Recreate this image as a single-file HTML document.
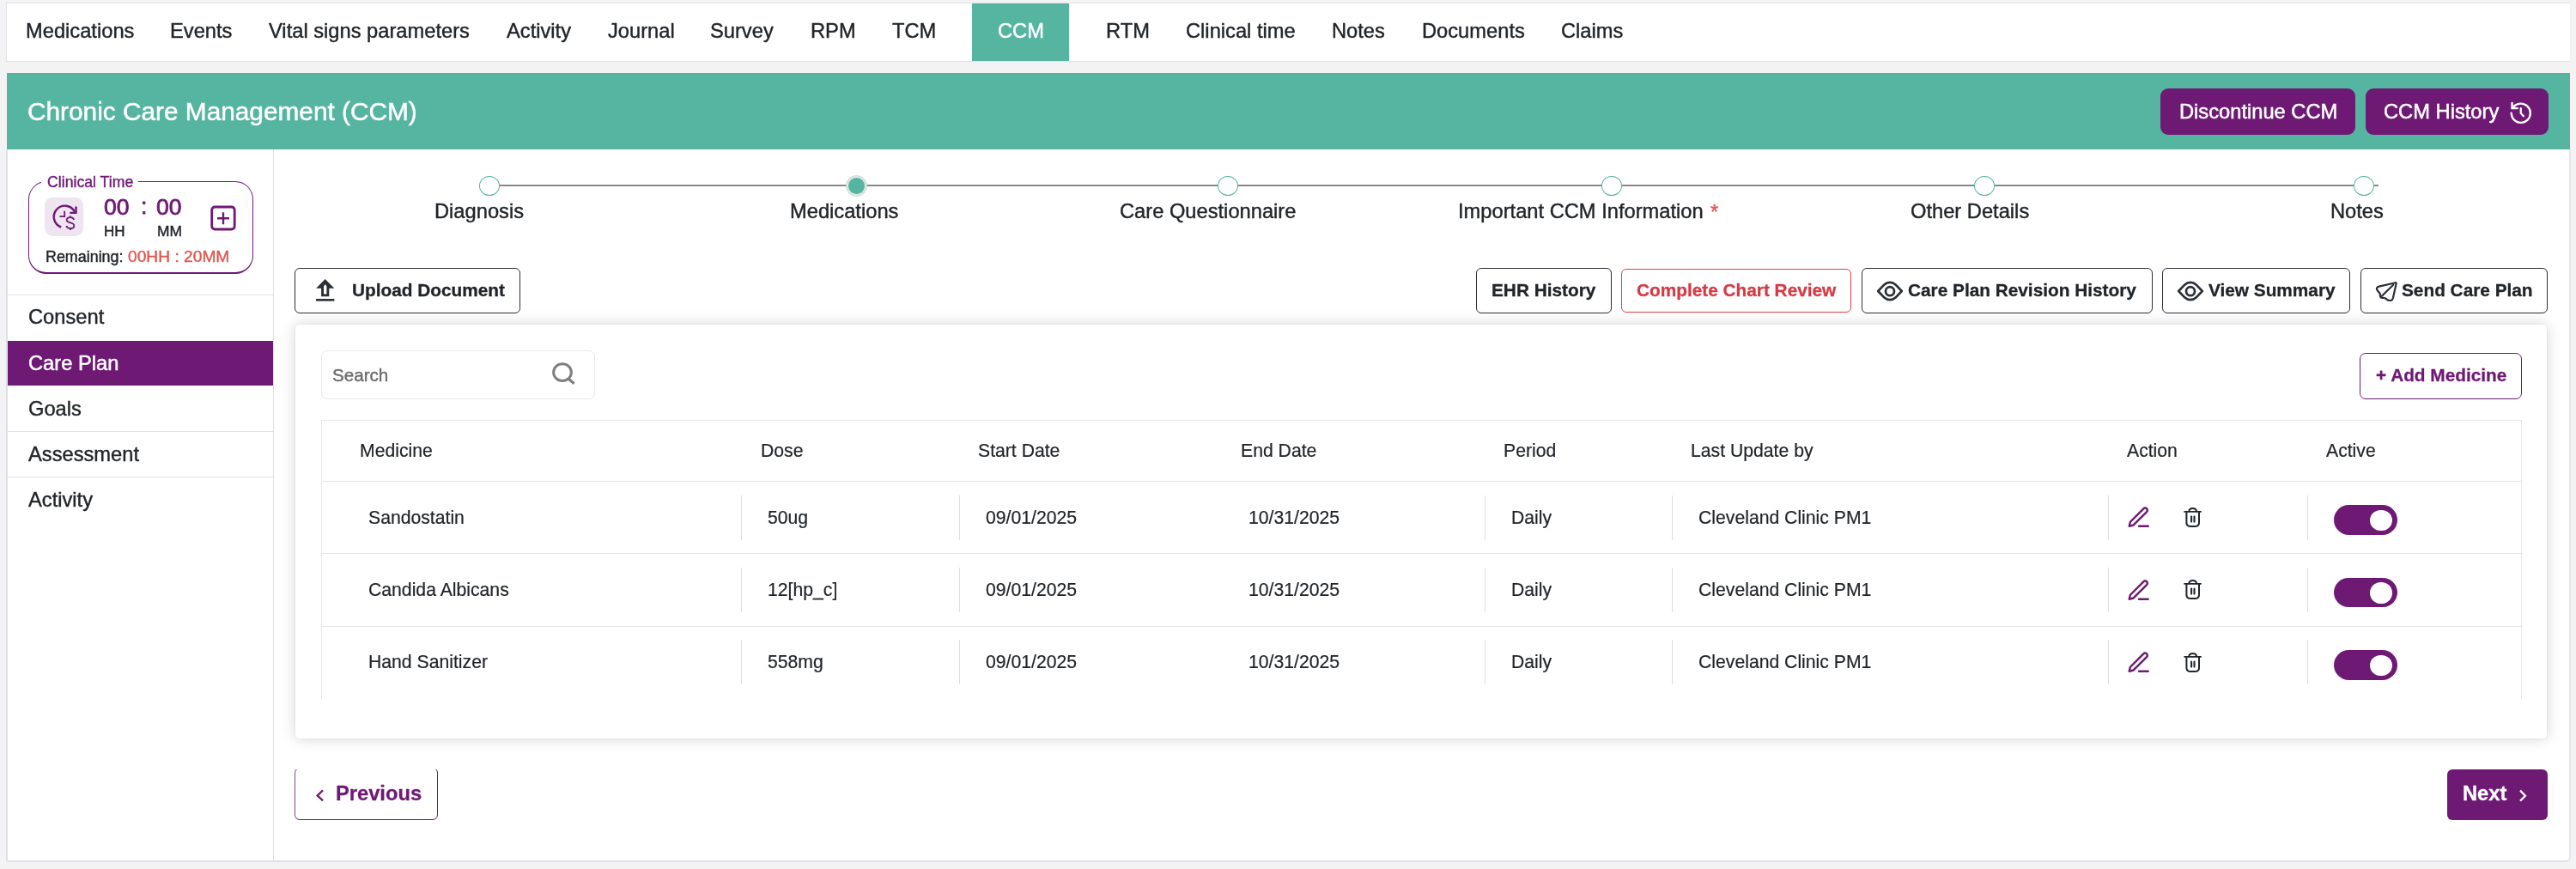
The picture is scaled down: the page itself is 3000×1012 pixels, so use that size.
<!DOCTYPE html>
<html><head><meta charset="utf-8"><title>CCM</title>
<style>
html,body{margin:0;padding:0;}
body{width:3000px;height:1012px;background:#f3f3f4;position:relative;overflow:hidden;font-family:"Liberation Sans",sans-serif;}
.t{position:absolute;line-height:1;white-space:nowrap;will-change:transform;-webkit-text-stroke:0.4px currentColor;}
.b{position:absolute;display:block;box-sizing:border-box;}
</style></head><body>
<div class="b" style="left:7px;top:3px;width:2986px;height:69px;background:#fff;border:1px solid #dfe2e7;border-right:none;"></div>
<div class="b" style="left:1132px;top:4px;width:113px;height:67px;background:#55b5a1;"></div>
<div class="t" style="left:30px;top:25px;font-size:23.7px;color:#212529;">Medications</div>
<div class="t" style="left:198px;top:25px;font-size:23.7px;color:#212529;">Events</div>
<div class="t" style="left:313px;top:25px;font-size:23.7px;color:#212529;">Vital signs parameters</div>
<div class="t" style="left:590px;top:25px;font-size:23.7px;color:#212529;">Activity</div>
<div class="t" style="left:708px;top:25px;font-size:23.7px;color:#212529;">Journal</div>
<div class="t" style="left:827px;top:25px;font-size:23.7px;color:#212529;">Survey</div>
<div class="t" style="left:944px;top:25px;font-size:23.7px;color:#212529;">RPM</div>
<div class="t" style="left:1039px;top:25px;font-size:23.7px;color:#212529;">TCM</div>
<div class="t" style="left:1288px;top:25px;font-size:23.7px;color:#212529;">RTM</div>
<div class="t" style="left:1381px;top:25px;font-size:23.7px;color:#212529;">Clinical time</div>
<div class="t" style="left:1551px;top:25px;font-size:23.7px;color:#212529;">Notes</div>
<div class="t" style="left:1656px;top:25px;font-size:23.7px;color:#212529;">Documents</div>
<div class="t" style="left:1818px;top:25px;font-size:23.7px;color:#212529;">Claims</div>
<div class="t" style="left:1162px;top:25px;font-size:23.7px;color:#fff;-webkit-text-stroke:0.45px #fff;">CCM</div>
<div class="b" style="left:7px;top:174px;width:2987.3px;height:830.3px;background:#fff;border-left:2px solid #dde1e6;border-bottom:2.2px solid #dde1e6;border-right:2px solid #e3e6ea;border-radius:0 0 6px 3px;"></div>
<div class="b" style="left:8px;top:85px;width:2985px;height:89px;background:#55b5a1;"></div>
<div class="t" style="left:32px;top:115px;font-size:29.8px;color:#fff;-webkit-text-stroke:0.5px #fff;">Chronic Care Management (CCM)</div>
<div class="b" style="left:2516px;top:103px;width:227px;height:54px;background:#6e1a75;border-radius:9px;"></div>
<div class="b" style="left:2755px;top:103px;width:213px;height:54px;background:#6e1a75;border-radius:9px;"></div>
<div class="t" style="left:2538px;top:119px;font-size:23.7px;color:#fff;-webkit-text-stroke:0.5px #fff;">Discontinue CCM</div>
<div class="t" style="left:2776px;top:119px;font-size:23.7px;color:#fff;-webkit-text-stroke:0.5px #fff;">CCM History</div>
<svg class="b" style="left:2921.24px;top:117.04px" width="29.52" height="29.52" viewBox="0 0 24 24" fill="none" stroke="#fff" stroke-width="1.9" stroke-linecap="round" stroke-linejoin="round"><path d="M3 12a9 9 0 1 0 9-9 9.75 9.75 0 0 0-6.74 2.74L3.7 7.4"/><path d="M3.7 2.3v5.1h5.1"/><path d="M12 7.5v4.5l2.5 2.8"/></svg>
<div class="b" style="left:318px;top:174px;width:1px;height:829px;background:#dfe1e5;"></div>
<div class="b" style="left:33px;top:211px;width:261.8px;height:107.69999999999999px;border:solid #6e1a75;border-width:1.4px 1.6px 2.1px 1.6px;border-radius:21px;box-sizing:border-box;"></div>
<div class="b" style="left:47.5px;top:205px;width:113.5px;height:17px;background:#fff;"></div>
<div class="t" style="left:55px;top:204px;font-size:17.7px;color:#6e1a75;">Clinical Time</div>
<div class="b" style="left:52px;top:230px;width:45px;height:45px;background:#efe5f1;border-radius:9px;"></div>
<svg class="b" style="left:52px;top:230px" width="45" height="45" viewBox="52 230 45 45" fill="none" stroke="#6e1a75" stroke-width="2.4" stroke-linecap="butt">
<path d="M71.2 264.5 A12.8 12.8 0 1 1 86.9 246.6"/>
<path d="M88.5 240.6 V247.9 H81.3"/>
<path d="M75.2 245.8 V252.2 H69.5" stroke-width="1.8"/>
<path d="M86.1 255.9 C85.5 253.9 83.8 253.1 81.9 253.1 C79.4 253.1 77.7 254.3 77.7 256.2 C77.7 258.2 79.5 258.8 81.9 259.4 C84.5 260 86.3 260.8 86.3 262.9 C86.3 264.9 84.5 266 81.9 266 C79.5 266 77.8 265 77.3 263.1 M81.9 251.2 V253.6 M81.9 265.6 V268" stroke-width="1.8"/>
</svg>
<div class="t" style="left:121px;top:228px;font-size:26.5px;color:#6e1a75;-webkit-text-stroke:0.8px #6e1a75;">00</div>
<div class="t" style="left:164px;top:227px;font-size:26.5px;color:#6e1a75;-webkit-text-stroke:0.8px #6e1a75;">:</div>
<div class="t" style="left:182px;top:228px;font-size:26.5px;color:#6e1a75;-webkit-text-stroke:0.8px #6e1a75;">00</div>
<div class="t" style="left:121px;top:261px;font-size:17px;color:#212529;">HH</div>
<div class="t" style="left:183px;top:261px;font-size:17.4px;color:#212529;">MM</div>
<svg class="b" style="left:244px;top:238px" width="32" height="32" viewBox="244 238 32 32" fill="none" stroke="#6e1a75" stroke-width="2.8" stroke-linecap="butt"><rect x="246.7" y="241" width="26.5" height="26" rx="3.5"/><path d="M253 254.3H267M260 247.3V261.3" stroke-width="2.4"/></svg>
<div class="t" style="left:53px;top:291px;font-size:17.9px;color:#212529;">Remaining:</div>
<div class="t" style="left:149px;top:289px;font-size:19.2px;color:#e0574f;">00HH : 20MM</div>
<div class="b" style="left:9px;top:343px;width:309px;height:1px;background:#e3e3e3;"></div>
<div class="b" style="left:9px;top:397px;width:309px;height:52px;background:#6e1a75;"></div>
<div class="b" style="left:9px;top:502px;width:309px;height:1px;background:#e3e3e3;"></div>
<div class="b" style="left:9px;top:555px;width:309px;height:1px;background:#e3e3e3;"></div>
<div class="t" style="left:33px;top:358px;font-size:23.7px;color:#212529;">Consent</div>
<div class="t" style="left:33px;top:412px;font-size:23.7px;color:#fff;-webkit-text-stroke:0.5px #fff;">Care Plan</div>
<div class="t" style="left:33px;top:465px;font-size:23.7px;color:#212529;">Goals</div>
<div class="t" style="left:33px;top:518px;font-size:23.7px;color:#212529;">Assessment</div>
<div class="t" style="left:33px;top:571px;font-size:23.7px;color:#212529;">Activity</div>
<div class="b" style="left:570px;top:215px;width:2200px;height:2px;background:#878787;"></div>
<div class="b" style="left:557.9px;top:204.9px;width:24.200000000000045px;height:23.19999999999999px;background:#fff;border:1.7px solid #55b5a1;border-radius:50%;box-sizing:border-box;"></div>
<div class="b" style="left:984.9px;top:203.60000000000002px;width:25.40000000000009px;height:25.399999999999977px;background:#e3e5e5;border:1px solid #bfe0d8;border-radius:50%;box-sizing:border-box;"></div>
<div class="b" style="left:987.9px;top:206.60000000000002px;width:19.40000000000009px;height:19.399999999999977px;background:#55b5a1;border-radius:50%;"></div>
<div class="b" style="left:1417.9px;top:204.9px;width:24.199999999999818px;height:23.19999999999999px;background:#fff;border:1.7px solid #55b5a1;border-radius:50%;box-sizing:border-box;"></div>
<div class="b" style="left:1864.8000000000002px;top:204.9px;width:24.199999999999818px;height:23.19999999999999px;background:#fff;border:1.7px solid #55b5a1;border-radius:50%;box-sizing:border-box;"></div>
<div class="b" style="left:2298.9px;top:204.9px;width:24.199999999999818px;height:23.19999999999999px;background:#fff;border:1.7px solid #55b5a1;border-radius:50%;box-sizing:border-box;"></div>
<div class="b" style="left:2740.9px;top:204.9px;width:24.199999999999818px;height:23.19999999999999px;background:#fff;border:1.7px solid #55b5a1;border-radius:50%;box-sizing:border-box;"></div>
<div class="t" style="left:506px;top:235px;font-size:23.7px;color:#212529;">Diagnosis</div>
<div class="t" style="left:920px;top:235px;font-size:23.7px;color:#212529;">Medications</div>
<div class="t" style="left:1304px;top:235px;font-size:23.7px;color:#212529;">Care Questionnaire</div>
<div class="t" style="left:1698px;top:235px;font-size:23.7px;color:#212529;">Important CCM Information</div>
<div class="t" style="left:2225px;top:235px;font-size:23.7px;color:#212529;">Other Details</div>
<div class="t" style="left:2714px;top:235px;font-size:23.7px;color:#212529;">Notes</div>
<div class="t" style="left:1992px;top:236px;font-size:23.7px;color:#e25555;">*</div>
<div class="b" style="left:343.3px;top:312.2px;width:262.3px;height:53.0px;border:1.2px solid #2b2f36;border-radius:6px;box-sizing:border-box;background:#fff;"></div>
<svg class="b" style="left:366px;top:323px" width="26" height="30" viewBox="366 323 26 30"><path d="M368.1 335.7 L378.7 325.1 L389.3 335.7 H383.3 V345.2 H374.1 V335.7 Z" fill="#2b2f36"/><path d="M377 342.4 V333.6 L378.7 331 L380.4 333.6 V342.4 Z" fill="#fff"/><rect x="368" y="348" width="21.4" height="2.6" fill="#2b2f36"/></svg>
<div class="t" style="left:410px;top:328px;font-size:20.8px;color:#212529;font-weight:700;-webkit-text-stroke:0.3px currentColor;">Upload Document</div>
<div class="b" style="left:1719px;top:312.2px;width:157.5px;height:53.0px;border:1.2px solid #2b2f36;border-radius:6px;box-sizing:border-box;background:#fff;"></div>
<div class="t" style="left:1737px;top:328px;font-size:20.8px;color:#212529;font-weight:700;-webkit-text-stroke:0.3px currentColor;">EHR History</div>
<div class="b" style="left:1888px;top:313px;width:267.9000000000001px;height:51px;border:1.2px solid #dc4250;border-radius:6px;box-sizing:border-box;background:#fff;"></div>
<div class="t" style="left:1906px;top:328px;font-size:20.8px;color:#d63a45;font-weight:700;-webkit-text-stroke:0.3px currentColor;">Complete Chart Review</div>
<div class="b" style="left:2168px;top:312.2px;width:338.6999999999998px;height:53.0px;border:1.2px solid #2b2f36;border-radius:6px;box-sizing:border-box;background:#fff;"></div>
<div class="b" style="left:2518.4px;top:312.2px;width:218.29999999999973px;height:53.0px;border:1.2px solid #2b2f36;border-radius:6px;box-sizing:border-box;background:#fff;"></div>
<div class="b" style="left:2749.2px;top:312.2px;width:217.60000000000036px;height:53.0px;border:1.2px solid #2b2f36;border-radius:6px;box-sizing:border-box;background:#fff;"></div>
<svg class="b" style="left:2184px;top:325px" width="34" height="28" viewBox="-17 -14 34 28" fill="none" stroke="#2b2f36" stroke-width="2.7" stroke-linejoin="round"><path d="M-13.8 0 L-6.5 -7.6 A9.45 9.45 0 0 1 6.5 -7.6 L13.8 0 L6.5 7.6 A9.45 9.45 0 0 1 -6.5 7.6 Z"/><circle cx="0" cy="0.2" r="5"/></svg>
<svg class="b" style="left:2534px;top:325px" width="34" height="28" viewBox="-17 -14 34 28" fill="none" stroke="#2b2f36" stroke-width="2.7" stroke-linejoin="round"><path d="M-13.8 0 L-6.5 -7.6 A9.45 9.45 0 0 1 6.5 -7.6 L13.8 0 L6.5 7.6 A9.45 9.45 0 0 1 -6.5 7.6 Z"/><circle cx="0" cy="0.2" r="5"/></svg>
<div class="t" style="left:2222px;top:328px;font-size:20.8px;color:#212529;font-weight:700;-webkit-text-stroke:0.3px currentColor;">Care Plan Revision History</div>
<div class="t" style="left:2572px;top:328px;font-size:20.8px;color:#212529;font-weight:700;-webkit-text-stroke:0.3px currentColor;">View Summary</div>
<svg class="b" style="left:2762px;top:324px" width="34" height="32" viewBox="2762 324 34 32" fill="none" stroke="#2b2f36" stroke-width="2.2" stroke-linejoin="round" stroke-linecap="round"><path d="M2789.8 329.2 L2770.5 333.6 Q2766.5 335.2 2768.6 338 L2771.6 341.8 L2772.2 345.6 Q2772.6 347.2 2775 346.9 Q2777.5 346.6 2779.3 348.4 Q2781.6 350.4 2784.4 349.9 Q2786.3 349.5 2786.8 347.5 L2790.6 330.4 Q2790.8 329 2789.8 329.2 Z"/><path d="M2787.2 331.8 L2772.8 345.7"/></svg>
<div class="t" style="left:2797px;top:328px;font-size:20.8px;color:#212529;font-weight:700;-webkit-text-stroke:0.3px currentColor;">Send Care Plan</div>
<div class="b" style="left:343.5px;top:377.5px;width:2622.7px;height:482.1px;background:#fff;border-radius:4.5px;box-shadow:0 0 17px rgba(0,0,0,0.17), 0 0 3px rgba(0,0,0,0.07);"></div>
<div class="b" style="left:374.2px;top:408px;width:318.59999999999997px;height:56.69999999999999px;border:1.2px solid #e9e9e9;border-radius:7px;box-sizing:border-box;"></div>
<div class="t" style="left:387px;top:427px;font-size:20.6px;color:#6a6a6a;">Search</div>
<svg class="b" style="left:640px;top:419px" width="34" height="32" viewBox="640 419 34 32" fill="none" stroke="#808080" stroke-width="3" stroke-linecap="butt"><ellipse cx="655" cy="433.6" rx="10.4" ry="9.9"/><path d="M662.3 441.2 L668.6 446.8" stroke-width="3.2"/></svg>
<div class="b" style="left:2748px;top:411px;width:188.5999999999999px;height:53.5px;border:1.6px solid #6e1a75;border-radius:7px;box-sizing:border-box;"></div>
<div class="t" style="left:2767px;top:427px;font-size:20.8px;color:#6e1a75;font-weight:700;-webkit-text-stroke:0.3px currentColor;">+ Add Medicine</div>
<div class="b" style="left:374px;top:489px;width:2563px;height:1px;background:#e6e6e6;"></div>
<div class="b" style="left:374px;top:489px;width:1px;height:324.5px;background:#e8e8e8;"></div>
<div class="b" style="left:2936px;top:489px;width:1px;height:324.5px;background:#e8e8e8;"></div>
<div class="b" style="left:374px;top:560px;width:2563px;height:1px;background:#e4e4e4;"></div>
<div class="b" style="left:374px;top:644px;width:2563px;height:1px;background:#e4e4e4;"></div>
<div class="b" style="left:374px;top:729px;width:2563px;height:1px;background:#e4e4e4;"></div>
<div class="t" style="left:419px;top:514px;font-size:21.2px;color:#212529;-webkit-text-stroke:0.2px currentColor;">Medicine</div>
<div class="t" style="left:886px;top:514px;font-size:21.2px;color:#212529;-webkit-text-stroke:0.2px currentColor;">Dose</div>
<div class="t" style="left:1139px;top:514px;font-size:21.2px;color:#212529;-webkit-text-stroke:0.2px currentColor;">Start Date</div>
<div class="t" style="left:1445px;top:514px;font-size:21.2px;color:#212529;-webkit-text-stroke:0.2px currentColor;">End Date</div>
<div class="t" style="left:1751px;top:514px;font-size:21.2px;color:#212529;-webkit-text-stroke:0.2px currentColor;">Period</div>
<div class="t" style="left:1969px;top:514px;font-size:21.2px;color:#212529;-webkit-text-stroke:0.2px currentColor;">Last Update by</div>
<div class="t" style="left:2477px;top:514px;font-size:21.2px;color:#212529;-webkit-text-stroke:0.2px currentColor;">Action</div>
<div class="t" style="left:2709px;top:514px;font-size:21.2px;color:#212529;-webkit-text-stroke:0.2px currentColor;">Active</div>
<div class="b" style="left:862.5px;top:576.5px;width:1.0px;height:52.0px;background:#dedede;"></div>
<div class="b" style="left:1116.9px;top:576.5px;width:1.0px;height:52.0px;background:#dedede;"></div>
<div class="b" style="left:1728.8px;top:576.5px;width:1.0px;height:52.0px;background:#dedede;"></div>
<div class="b" style="left:1946.5px;top:576.5px;width:1.0px;height:52.0px;background:#dedede;"></div>
<div class="b" style="left:2454.9px;top:576.5px;width:1.0px;height:52.0px;background:#dedede;"></div>
<div class="b" style="left:2686.9px;top:576.5px;width:1.0px;height:52.0px;background:#dedede;"></div>
<div class="t" style="left:429px;top:592px;font-size:21.2px;color:#212529;-webkit-text-stroke:0.2px currentColor;">Sandostatin</div>
<div class="t" style="left:894px;top:592px;font-size:21.2px;color:#212529;-webkit-text-stroke:0.2px currentColor;">50ug</div>
<div class="t" style="left:1148px;top:592px;font-size:21.2px;color:#212529;-webkit-text-stroke:0.2px currentColor;">09/01/2025</div>
<div class="t" style="left:1454px;top:592px;font-size:21.2px;color:#212529;-webkit-text-stroke:0.2px currentColor;">10/31/2025</div>
<div class="t" style="left:1760px;top:592px;font-size:21.2px;color:#212529;-webkit-text-stroke:0.2px currentColor;">Daily</div>
<div class="t" style="left:1978px;top:592px;font-size:21.2px;color:#212529;-webkit-text-stroke:0.2px currentColor;">Cleveland Clinic PM1</div>
<svg class="b" style="left:2476px;top:588.30px" width="29.64" height="29.64" viewBox="0 0 24 24" fill="none" stroke="#6e1a75" stroke-width="2" stroke-linecap="round" stroke-linejoin="round"><path d="M12.2 20h8.6"/><path d="M16.5 3.5a2.121 2.121 0 0 1 3 3L7 19l-4 1 1-4L16.5 3.5z"/></svg>
<svg class="b" style="left:2540px;top:588.00px" width="28" height="30" viewBox="2540 588 28 30" fill="none" stroke="#212529" stroke-width="2" stroke-linecap="round" stroke-linejoin="round"><path d="M2544 595.9H2563.2" stroke-width="1.6"/><path d="M2549.3 595.5 Q2549.6 591.9 2553.6 591.9 Q2557.8 591.9 2558.1 595.5"/><path d="M2546.4 596 V608.8 Q2546.4 612.9 2550.5 612.9 H2556.9 Q2561 612.9 2561 608.8 V596"/><path d="M2552.1 601.6V607.6M2555.5 601.6V607.6" stroke-width="2.1"/></svg>
<div class="b" style="left:2718px;top:588.2px;width:74px;height:34.59999999999991px;background:#6e1a75;border-radius:18px;"></div>
<div class="b" style="left:2760.1px;top:593.7px;width:25.5px;height:24.59999999999991px;background:#fff;border-radius:50%;"></div>
<div class="b" style="left:862.5px;top:660.9px;width:1.0px;height:52.0px;background:#dedede;"></div>
<div class="b" style="left:1116.9px;top:660.9px;width:1.0px;height:52.0px;background:#dedede;"></div>
<div class="b" style="left:1728.8px;top:660.9px;width:1.0px;height:52.0px;background:#dedede;"></div>
<div class="b" style="left:1946.5px;top:660.9px;width:1.0px;height:52.0px;background:#dedede;"></div>
<div class="b" style="left:2454.9px;top:660.9px;width:1.0px;height:52.0px;background:#dedede;"></div>
<div class="b" style="left:2686.9px;top:660.9px;width:1.0px;height:52.0px;background:#dedede;"></div>
<div class="t" style="left:429px;top:676px;font-size:21.2px;color:#212529;-webkit-text-stroke:0.2px currentColor;">Candida Albicans</div>
<div class="t" style="left:894px;top:676px;font-size:21.2px;color:#212529;-webkit-text-stroke:0.2px currentColor;">12[hp_c]</div>
<div class="t" style="left:1148px;top:676px;font-size:21.2px;color:#212529;-webkit-text-stroke:0.2px currentColor;">09/01/2025</div>
<div class="t" style="left:1454px;top:676px;font-size:21.2px;color:#212529;-webkit-text-stroke:0.2px currentColor;">10/31/2025</div>
<div class="t" style="left:1760px;top:676px;font-size:21.2px;color:#212529;-webkit-text-stroke:0.2px currentColor;">Daily</div>
<div class="t" style="left:1978px;top:676px;font-size:21.2px;color:#212529;-webkit-text-stroke:0.2px currentColor;">Cleveland Clinic PM1</div>
<svg class="b" style="left:2476px;top:672.70px" width="29.64" height="29.64" viewBox="0 0 24 24" fill="none" stroke="#6e1a75" stroke-width="2" stroke-linecap="round" stroke-linejoin="round"><path d="M12.2 20h8.6"/><path d="M16.5 3.5a2.121 2.121 0 0 1 3 3L7 19l-4 1 1-4L16.5 3.5z"/></svg>
<svg class="b" style="left:2540px;top:672.40px" width="28" height="30" viewBox="2540 588 28 30" fill="none" stroke="#212529" stroke-width="2" stroke-linecap="round" stroke-linejoin="round"><path d="M2544 595.9H2563.2" stroke-width="1.6"/><path d="M2549.3 595.5 Q2549.6 591.9 2553.6 591.9 Q2557.8 591.9 2558.1 595.5"/><path d="M2546.4 596 V608.8 Q2546.4 612.9 2550.5 612.9 H2556.9 Q2561 612.9 2561 608.8 V596"/><path d="M2552.1 601.6V607.6M2555.5 601.6V607.6" stroke-width="2.1"/></svg>
<div class="b" style="left:2718px;top:672.6px;width:74px;height:34.59999999999991px;background:#6e1a75;border-radius:18px;"></div>
<div class="b" style="left:2760.1px;top:678.1px;width:25.5px;height:24.59999999999991px;background:#fff;border-radius:50%;"></div>
<div class="b" style="left:862.5px;top:745.3px;width:1.0px;height:52.0px;background:#dedede;"></div>
<div class="b" style="left:1116.9px;top:745.3px;width:1.0px;height:52.0px;background:#dedede;"></div>
<div class="b" style="left:1728.8px;top:745.3px;width:1.0px;height:52.0px;background:#dedede;"></div>
<div class="b" style="left:1946.5px;top:745.3px;width:1.0px;height:52.0px;background:#dedede;"></div>
<div class="b" style="left:2454.9px;top:745.3px;width:1.0px;height:52.0px;background:#dedede;"></div>
<div class="b" style="left:2686.9px;top:745.3px;width:1.0px;height:52.0px;background:#dedede;"></div>
<div class="t" style="left:429px;top:760px;font-size:21.2px;color:#212529;-webkit-text-stroke:0.2px currentColor;">Hand Sanitizer</div>
<div class="t" style="left:894px;top:760px;font-size:21.2px;color:#212529;-webkit-text-stroke:0.2px currentColor;">558mg</div>
<div class="t" style="left:1148px;top:760px;font-size:21.2px;color:#212529;-webkit-text-stroke:0.2px currentColor;">09/01/2025</div>
<div class="t" style="left:1454px;top:760px;font-size:21.2px;color:#212529;-webkit-text-stroke:0.2px currentColor;">10/31/2025</div>
<div class="t" style="left:1760px;top:760px;font-size:21.2px;color:#212529;-webkit-text-stroke:0.2px currentColor;">Daily</div>
<div class="t" style="left:1978px;top:760px;font-size:21.2px;color:#212529;-webkit-text-stroke:0.2px currentColor;">Cleveland Clinic PM1</div>
<svg class="b" style="left:2476px;top:757.10px" width="29.64" height="29.64" viewBox="0 0 24 24" fill="none" stroke="#6e1a75" stroke-width="2" stroke-linecap="round" stroke-linejoin="round"><path d="M12.2 20h8.6"/><path d="M16.5 3.5a2.121 2.121 0 0 1 3 3L7 19l-4 1 1-4L16.5 3.5z"/></svg>
<svg class="b" style="left:2540px;top:756.80px" width="28" height="30" viewBox="2540 588 28 30" fill="none" stroke="#212529" stroke-width="2" stroke-linecap="round" stroke-linejoin="round"><path d="M2544 595.9H2563.2" stroke-width="1.6"/><path d="M2549.3 595.5 Q2549.6 591.9 2553.6 591.9 Q2557.8 591.9 2558.1 595.5"/><path d="M2546.4 596 V608.8 Q2546.4 612.9 2550.5 612.9 H2556.9 Q2561 612.9 2561 608.8 V596"/><path d="M2552.1 601.6V607.6M2555.5 601.6V607.6" stroke-width="2.1"/></svg>
<div class="b" style="left:2718px;top:757.0px;width:74px;height:34.59999999999991px;background:#6e1a75;border-radius:18px;"></div>
<div class="b" style="left:2760.1px;top:762.5px;width:25.5px;height:24.59999999999991px;background:#fff;border-radius:50%;"></div>
<div class="b" style="left:343.2px;top:894.4px;width:166.8px;height:60.5px;border:1.4px solid #6e1a75;border-bottom-width:1.7px;border-radius:6px;box-sizing:border-box;clip-path:inset(1.6px 0 0 0);"></div>
<svg class="b" style="left:364px;top:912px" width="18" height="28" viewBox="364 912 18 28" fill="none" stroke="#6e1a75" stroke-width="2.4" stroke-linecap="butt" stroke-linejoin="miter"><path d="M376 920.3 L369.7 926.4 L376 932.5"/></svg>
<div class="t" style="left:391px;top:913px;font-size:23.7px;color:#6e1a75;font-weight:700;-webkit-text-stroke:0.3px currentColor;">Previous</div>
<div class="b" style="left:2850px;top:896px;width:117px;height:59px;background:#6e1a75;border-radius:6px;"></div>
<div class="t" style="left:2868px;top:913px;font-size:23.7px;color:#fff;font-weight:700;-webkit-text-stroke:0.3px currentColor;">Next</div>
<svg class="b" style="left:2928px;top:912px" width="20" height="28" viewBox="2928 912 20 28" fill="none" stroke="#fff" stroke-width="2.3" stroke-linecap="butt" stroke-linejoin="miter"><path d="M2935 920.6 L2940.9 926.7 L2935 932.8"/></svg>
</body></html>
